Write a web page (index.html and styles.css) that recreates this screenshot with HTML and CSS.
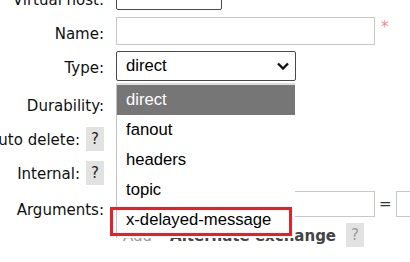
FILE: index.html
```html
<!DOCTYPE html>
<html>
<head>
  <title>Add a new exchange</title>
  <link rel="stylesheet" href="styles.css">
</head>
<body>
  <div class="form">
    <div class="label first">Virtual host:</div>
    <div class="field">
      <div class="select vhost">advanced
        <svg class="chevron" width="12" height="8" viewBox="0 0 12 8"><path d="M1 1.5 L6 6.5 L11 1.5" fill="none" stroke="#111" stroke-width="2.4"/></svg>
      </div>
    </div>

    <div class="label">Name:</div>
    <div class="field">
      <input type="text" class="text name">
      <span class="req">*</span>
    </div>

    <div class="label">Type:</div>
    <div class="field">
      <div class="select type">direct
        <svg class="chevron" width="12" height="8" viewBox="0 0 12 8"><path d="M1 1.5 L6 6.5 L11 1.5" fill="none" stroke="#111" stroke-width="2.4"/></svg>
      </div>
    </div>

    <div class="label">Durability:</div>
    <div class="field">
      <div class="select short">Durable</div>
    </div>

    <div class="label"><span>Auto delete:</span><span class="help">?</span></div>
    <div class="field">
      <div class="select short">No</div>
    </div>

    <div class="label"><span>Internal:</span><span class="help">?</span></div>
    <div class="field">
      <div class="select short">No</div>
    </div>

    <div class="label">Arguments:</div>
    <div class="field args">
      <input type="text" class="text key">
      <span class="eq">=</span>
      <input type="text" class="text value">
    </div>

    <div class="label"></div>
    <div class="field add">
      <span class="add-label">Add</span>
      <span class="alt">Alternate exchange</span>
      <span class="help muted">?</span>
    </div>
  </div>

  <!-- open list of the Type select -->
  <ul class="dropdown">
    <li class="selected">direct</li>
    <li>fanout</li>
    <li>headers</li>
    <li>topic</li>
    <li>x-delayed-message</li>
  </ul>
  <div class="mark"></div>
</body>
</html>
```

FILE: styles.css
```css
body {
  margin: 0;
  font-family: "DejaVu Sans", Verdana, sans-serif;
  font-size: 15px;
  color: #111;
  background: #fff;
  overflow: hidden;
}

.form {
  display: grid;
  grid-template-columns: 104px 294px;
  grid-template-rows: 37px 34px 38px 34px 34px 36px 34px;
  column-gap: 12px;
  margin-top: -20px;
}

.label {
  display: flex;
  justify-content: flex-end;
  align-items: flex-start;
  padding-top: 8px;
  white-space: nowrap;
}

.label.first {
  padding-top: 11px;
}

.field {
  display: flex;
  align-items: flex-start;
  white-space: nowrap;
}

.label > *,
.field > * {
  flex-shrink: 0;
}

.help {
  display: inline-block;
  width: 18px;
  height: 24px;
  line-height: 24px;
  margin-top: -4px;
  margin-left: 6px;
  text-align: center;
  background: #e2e2e2;
  color: #222;
}

.help.muted {
  color: #999;
  margin-left: 10px;
}

.select {
  box-sizing: border-box;
  display: flex;
  align-items: center;
  justify-content: space-between;
  height: 30px;
  padding: 0 6px 0 9px;
  border: 1px solid #4a4a4a;
  border-radius: 2px;
  background: #fff;
  font-family: "Liberation Sans", Arial, sans-serif;
  font-size: 16.67px;
  color: #000;
}

.select.vhost {
  width: 106px;
}

.select.type {
  width: 180px;
}

.select.short {
  width: 120px;
}

.chevron {
  display: block;
}

.text {
  box-sizing: border-box;
  height: 28px;
  margin: 0;
  padding: 0 6px;
  border: 1px solid #c8c8c8;
  background: #fff;
  font-family: "Liberation Sans", Arial, sans-serif;
  font-size: 15px;
}

.name {
  width: 259px;
}

.req {
  margin-left: 6px;
  padding-top: 1px;
  color: #f08a8a;
}

.args .text {
  height: 26px;
  margin-top: -2px;
}

.key {
  width: 259px;
}

.value {
  width: 80px;
}

.eq {
  margin: 2px 4px 0;
  color: #333;
}

.add-label {
  margin-left: 7px;
  margin-right: 18px;
  color: #999;
}

.alt {
  font-weight: bold;
  color: #444;
}

.dropdown {
  position: absolute;
  left: 116px;
  top: 83px;
  width: 178px;
  margin: 0;
  padding: 0 0 3px;
  list-style: none;
  background: #fff;
  border-top: 2px solid #dedede;
  border-left: 1px solid #c4c4c4;
  font-family: "Liberation Sans", Arial, sans-serif;
  font-size: 16.67px;
  color: #000;
}

.dropdown li {
  height: 30px;
  line-height: 30px;
  padding-left: 9px;
}

.dropdown li.selected {
  background: #767676;
  color: #fff;
}

.mark {
  position: absolute;
  left: 110px;
  top: 207px;
  width: 182px;
  height: 29px;
  box-sizing: border-box;
  border: 3px solid #e42127;
}
```
